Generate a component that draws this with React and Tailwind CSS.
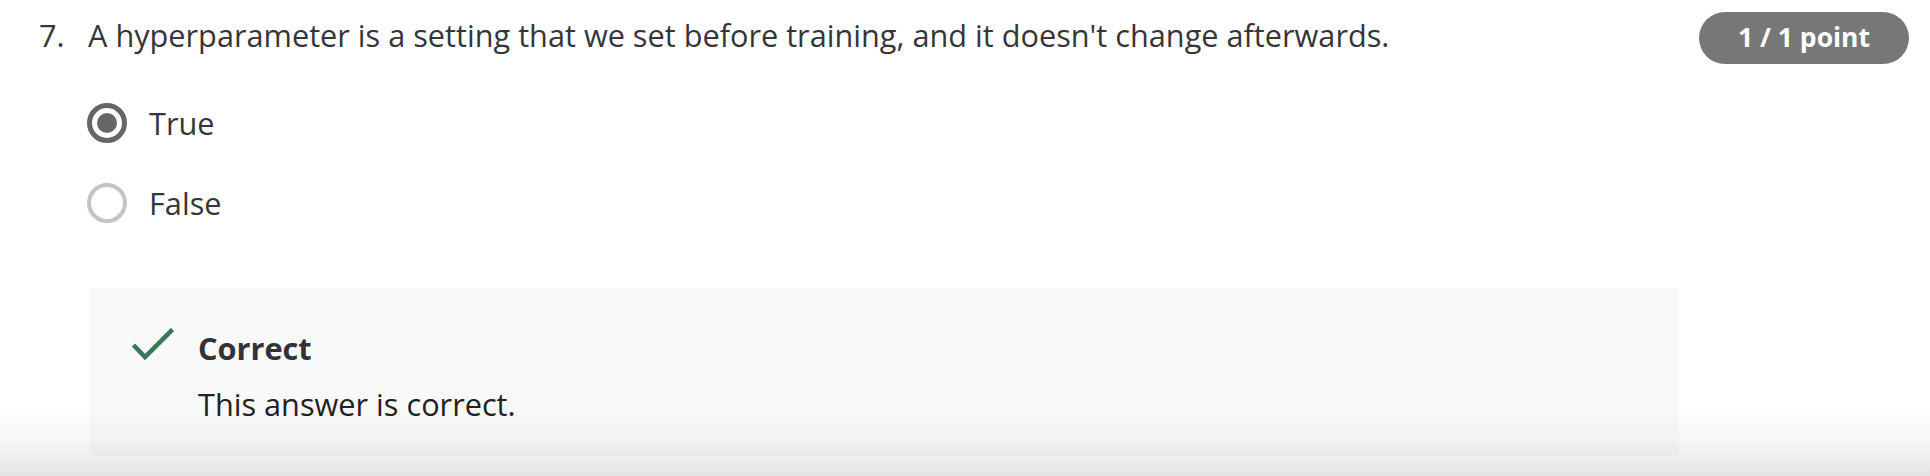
export default function App() {
  const options = [
    { label: "True", checked: true },
    { label: "False", checked: false },
  ];

  return (
    <div className="relative h-[476px] w-full overflow-hidden bg-white font-['Open_Sans',sans-serif] text-[#363636]">
      <div className="flex items-start justify-between pl-[39px] pr-[21px] pt-[12px]">
        <div className="mt-[2px] flex text-[30.7px] leading-[42px]">
          <span className="w-[49px]">7.</span>
          <span>A hyperparameter is a setting that we set before training, and it doesn't change afterwards.</span>
        </div>
        <div className="flex h-[52px] w-[210px] items-center justify-center rounded-full bg-[#777777] text-[26.5px] font-bold text-white">
          1 / 1 point
        </div>
      </div>

      <div className="ml-[87px] mt-[39px] flex flex-col gap-[40px]">
        {options.map((o) => (
          <label key={o.label} className="flex h-[40px] items-center gap-[22px]">
            {o.checked ? (
              <span className="flex h-[40px] w-[40px] items-center justify-center rounded-full border-[5px] border-[#666666]">
                <span className="h-[20px] w-[20px] rounded-full bg-[#666666]" />
              </span>
            ) : (
              <span className="h-[40px] w-[40px] rounded-full border-[4px] border-[#c4c4c4]" />
            )}
            <span className="text-[30.7px] leading-[42px]">{o.label}</span>
          </label>
        ))}
      </div>

      <div className="ml-[89px] mt-[65px] h-[168px] w-[1590px] bg-[#f8f9f9] pl-[43px] pt-[39px]">
        <div className="flex items-start gap-[24px]">
          <svg width="42" height="32" viewBox="0 0 42 32" className="mt-[1px] shrink-0">
            <polyline points="1.5,17 13,29 40.5,1.5" fill="none" stroke="#357a55" strokeWidth="4.5" />
          </svg>
          <div>
            <div className="text-[30.7px] font-bold leading-[42px] text-[#333333]">Correct</div>
            <div className="mt-[14px] text-[30.7px] leading-[42px] text-[#222222]">This answer is correct.</div>
          </div>
        </div>
      </div>

      <div className="pointer-events-none absolute bottom-0 left-0 h-[72px] w-full bg-linear-to-b from-black/0 via-black/[0.03] to-black/[0.11]" />
    </div>
  );
}
